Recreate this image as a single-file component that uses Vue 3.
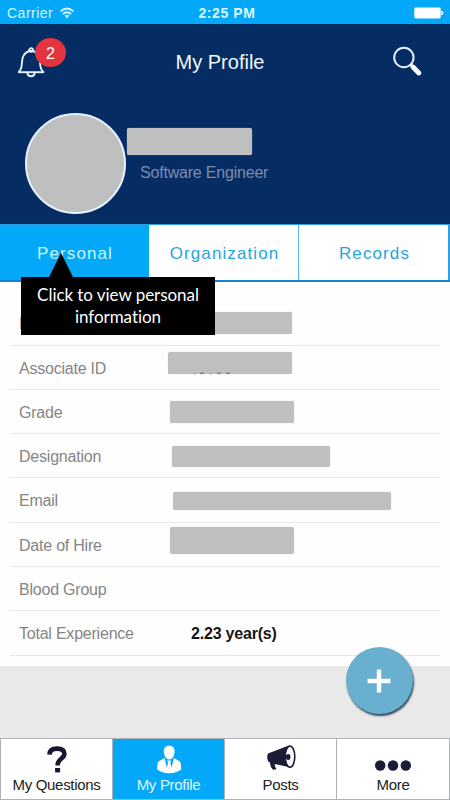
<template>
  <div class="screen">
    <div class="status-bar">
      <div class="carrier">
        <span class="carrier-name">Carrier</span>
        <svg class="wifi" viewBox="0 0 16 12" width="16" height="12">
          <path d="M1.5 4.4 Q8 -1.3 14.5 4.4 M3.8 7 Q8 3.4 12.2 7" fill="none" stroke="#d9f6ff" stroke-width="1.9" />
          <path d="M5.5 8.6 Q8 6.8 10.5 8.6 L8 11.4 Z" fill="#d9f6ff" />
        </svg>
      </div>
      <span class="time">2:25 PM</span>
      <svg class="battery" viewBox="0 0 30 12" width="30" height="12">
        <rect x="0.3" y="0.5" width="26.4" height="11" rx="1.4" fill="#fff" />
        <path d="M27.4 3.6 Q29.4 4.2 29.4 6 Q29.4 7.8 27.4 8.4 Z" fill="#fff" />
      </svg>
    </div>

    <header class="header">
      <div class="title-bar">
        <div class="bell">
          <svg viewBox="0 0 30 32" width="30" height="32">
            <g fill="none" stroke="#eaf2ff" stroke-width="1.9">
              <path d="M2 25.2 H28.2" />
              <path d="M2.6 24.8 Q5.7 23 5.9 16 C6 9 8 5.6 13.2 4 H17 C22 5.6 24 9 24.1 16 Q24.3 23 27.4 24.8" />
              <circle cx="15.1" cy="2.9" r="1.8" />
              <path d="M11.3 25.5 Q11.8 29.2 15.1 29.2 Q18.3 29.2 18.8 25.5" />
            </g>
          </svg>
          <span class="badge">2</span>
        </div>
        <h1 class="title">My Profile</h1>
        <svg class="search" viewBox="0 0 30 30" width="30" height="30">
          <circle cx="11.9" cy="11.5" r="9.7" fill="none" stroke="#e8f0fc" stroke-width="2" />
          <path d="M18.2 18 L21 20.8" stroke="#fff" stroke-width="2.6" />
          <path d="M21 21 L26.8 27" stroke="#fff" stroke-width="4.8" stroke-linecap="round" />
        </svg>
      </div>
      <div class="user">
        <div class="avatar"></div>
        <div class="user-info">
          <div class="masked user-name"></div>
          <div class="user-role">Software Engineer</div>
        </div>
      </div>
    </header>

    <nav class="tabs">
      <button
        v-for="tab in tabs"
        :key="tab"
        class="tab"
        :class="{ active: tab === activeTab }"
        @click="activeTab = tab"
      >
        {{ tab }}
      </button>
      <div class="tooltip">Click to view personal<br />information</div>
    </nav>

    <main class="details">
      <div v-for="row in rows" :key="row.label" class="row">
        <span class="label">{{ row.label }}</span>
        <strong v-if="row.value" class="value">{{ row.value }}</strong>
        <div v-else-if="row.mask" class="masked" :style="maskStyle(row.mask)">
          <svg v-if="row.label === 'Associate ID'" class="residue" viewBox="0 0 42 3" width="42" height="3">
            <path d="M3 1 v1 M8 .8 q2 1.8 4 0 M19 1 v1 M25 .8 q2 1.8 4 0 M34 .8 q2 1.8 4 0" />
          </svg>
        </div>
      </div>
    </main>

    <div class="spacer">
      <button class="fab" aria-label="Add">
        <svg viewBox="0 0 24 24" width="24" height="24">
          <path d="M12 .6 V23.4 M.6 12 H23.4" stroke="#fff" stroke-width="4.4" />
        </svg>
      </button>
    </div>

    <footer class="bottom-nav">
      <div class="nav-item">
        <svg viewBox="0 0 36 30" width="36" height="30">
          <path d="M10.4 9.6 C10.6 5 13.4 3.6 18 3.6 C23 3.6 25.4 5.8 25.4 8.8 C25.4 14 18.6 13.2 18.6 20.4" fill="none" stroke="#17182e" stroke-width="4.6" />
          <rect x="16.1" y="23" width="5" height="4.4" fill="#17182e" />
        </svg>
        <span>My Questions</span>
      </div>
      <div class="nav-item active">
        <svg viewBox="0 0 36 30" width="36" height="30">
          <path d="M18.2 .8 C22.1 .8 23.8 3.3 23.6 6.8 C23.4 10.4 21.6 14.4 18.2 14.4 C14.8 14.4 13 10.4 12.8 6.8 C12.6 3.3 14.3 .8 18.2 .8 Z" fill="#fff" />
          <path d="M13.6 13 L7.8 16.2 Q6.2 17.2 6.2 24.6 Q11 28.2 18.2 28.2 Q25.5 28.2 30.2 24.6 Q30.2 17.2 28.6 16.2 L22.8 13 L20.6 22.8 L19.3 17.6 L20.2 15.6 H16.2 L17.1 17.6 L15.8 22.8 Z" fill="#fff" />
        </svg>
        <span>My Profile</span>
      </div>
      <div class="nav-item">
        <svg viewBox="0 0 36 30" width="36" height="30">
          <path d="M5 8.6 L25.8 .4 L28 22.6 L11.8 19 Q11.4 21.4 13.6 24.2 L10 24.8 Q6.8 21.5 7 17.6 L5.2 16.4 Q3.3 12 5 8.6 Z" fill="#1b1c36" />
          <ellipse cx="27" cy="11.6" rx="4.8" ry="10.6" fill="#fff" stroke="#1b1c36" stroke-width="1.6" />
          <ellipse cx="25.2" cy="12" rx="2.3" ry="3" fill="#1b1c36" />
        </svg>
        <span>Posts</span>
      </div>
      <div class="nav-item">
        <svg viewBox="0 0 36 30" width="36" height="30">
          <g fill="#1b1c36">
            <circle cx="5.2" cy="20.5" r="5.2" />
            <circle cx="18" cy="20.5" r="5.2" />
            <circle cx="30.8" cy="20.5" r="5.2" />
          </g>
        </svg>
        <span>More</span>
      </div>
    </footer>
  </div>
</template>

<script setup>
import { ref } from 'vue'

const tabs = ['Personal', 'Organization', 'Records']
const activeTab = ref('Personal')

// mask: size of the hidden value and its offset inside the row
const rows = [
  { label: 'Name', mask: { left: 0, top: 10.5, width: 124, height: 22 } },
  { label: 'Associate ID', mask: { left: 0, top: 6, width: 124, height: 22 } },
  { label: 'Grade', mask: { left: 2, top: 11.5, width: 124, height: 22 } },
  { label: 'Designation', mask: { left: 4, top: 11.5, width: 158, height: 21 } },
  { label: 'Email', mask: { left: 5, top: 13.5, width: 218, height: 18 } },
  { label: 'Date of Hire', mask: { left: 2, top: 4, width: 124, height: 27 } },
  { label: 'Blood Group' },
  { label: 'Total Experience', value: '2.23 year(s)' }
]

const maskStyle = (mask) => ({
  marginLeft: mask.left + 'px',
  marginTop: mask.top + 'px',
  width: mask.width + 'px',
  height: mask.height + 'px'
})
</script>

<style>
body {
  margin: 0;
  background: #e9e9e9;
}
</style>

<style scoped>
.screen {
  display: flex;
  flex-direction: column;
  width: 450px;
  height: 800px;
  overflow: hidden;
  background: #e9e9e9;
  font-family: 'Liberation Sans', Arial, sans-serif;
}

.screen * {
  box-sizing: border-box;
}

button {
  padding: 0;
  border: 0;
  font-family: inherit;
}

.status-bar {
  display: grid;
  grid-template-columns: 1fr auto 1fr;
  align-items: center;
  height: 24px;
  padding: 1px 6px 0 7px;
  background: #03a9f8;
  color: #d9f6ff;
  font-size: 14px;
}

.carrier {
  display: flex;
  align-items: center;
  gap: 6px;
}

.carrier-name {
  letter-spacing: 0.5px;
}

.time {
  padding-left: 3px;
  font-weight: bold;
  letter-spacing: 0.6px;
}

.battery {
  justify-self: end;
}

.header {
  height: 200px;
  background: #052d64;
}

.title-bar {
  display: grid;
  grid-template-columns: 1fr auto 1fr;
  height: 89px;
  padding: 0 28px 0 16px;
}

.bell {
  position: relative;
  padding-top: 23px;
}

.badge {
  position: absolute;
  top: 14px;
  left: 19px;
  width: 31px;
  height: 29px;
  border-radius: 50%;
  background: #e3353f;
  color: #fff;
  font-size: 16px;
  line-height: 31px;
  text-align: center;
}

.title {
  margin: 26px 0 0;
  padding-left: 2px;
  color: #f1f6ff;
  font-size: 20px;
  font-weight: normal;
  line-height: 24px;
}

.search {
  margin-top: 22px;
  justify-self: end;
}

.user {
  display: flex;
  padding-left: 25px;
}

.avatar {
  width: 101px;
  height: 101px;
  border: 2px solid #e8f1ff;
  border-radius: 50%;
  background: #bfbfbf;
}

.user-info {
  padding: 15px 0 0 1px;
}

.masked {
  border-radius: 2px;
  background: #bfbfbf;
  box-shadow: 0 0 1px #bfbfbf;
}

.user-name {
  width: 125px;
  height: 27px;
}

.user-role {
  margin: 8px 0 0 13px;
  color: #7b8cae;
  font-size: 16px;
  line-height: 20px;
  letter-spacing: -0.2px;
}

.tabs {
  position: relative;
  display: grid;
  grid-template-columns: 149px 150px 151px;
  height: 58px;
  border-top: 1px solid #2ba2e8;
  border-bottom: 2px solid #1482cc;
  background: #fff;
}

.tab {
  border-right: 1px solid #55bbed;
  background: #fff;
  color: #27a4da;
  font-size: 17px;
  line-height: 20px;
  letter-spacing: 1.1px;
  padding: 3px 0 0 2px;
}

.tab:nth-child(3) {
  border-right: 2px solid #2ba2e8;
}

.tab.active {
  border-right-color: #03a9f8;
  background: #03a9f8;
  color: #c8f4ff;
}

.tooltip {
  position: absolute;
  top: 52px;
  left: 21px;
  z-index: 2;
  width: 194px;
  height: 58px;
  padding-top: 7px;
  background: #000;
  color: #fff;
  font-family: Lato, sans-serif;
  font-size: 17px;
  line-height: 22px;
  letter-spacing: -0.05px;
  text-align: center;
}

.tooltip::before {
  content: '';
  position: absolute;
  top: -24px;
  left: 28px;
  border: 12.5px solid transparent;
  border-top: 0;
  border-bottom: 24px solid #000;
}

.details {
  height: 384px;
  padding: 19.3px 10px 0;
  background: #fefefe;
}

.row {
  display: grid;
  grid-template-columns: 149px 1fr;
  align-items: start;
  height: 44.3px;
  padding-left: 9px;
  border-bottom: 1px solid #e9e9e9;
}

.label {
  padding-top: 13px;
  color: #858585;
  font-size: 16px;
  line-height: 20px;
  letter-spacing: -0.22px;
}

.value {
  padding: 13px 0 0 23px;
  color: #161616;
  font-size: 16px;
  line-height: 20px;
  letter-spacing: -0.2px;
}

.residue {
  display: block;
  margin: 20px 0 0 24px;
  fill: none;
  stroke: #666;
  stroke-width: 1;
}

.spacer {
  position: relative;
  flex: 1;
}

.fab {
  position: absolute;
  top: -19px;
  left: 346px;
  display: flex;
  align-items: center;
  justify-content: center;
  width: 67px;
  height: 67px;
  padding-right: 2px;
  border-radius: 50%;
  background: #69afd0;
  box-shadow: 1px 2px 2px #34495a;
}

.bottom-nav {
  display: grid;
  grid-template-columns: repeat(4, 112px);
  height: 62px;
  border: 1px solid #aeb2b6;
  background: #fff;
}

.nav-item {
  display: flex;
  flex-direction: column;
  align-items: center;
  padding-top: 6px;
  border-right: 1px solid #aeb2b6;
  color: #222;
  font-size: 15px;
  line-height: 20px;
  letter-spacing: -0.3px;
}

.nav-item:last-child {
  border-right: 0;
}

.nav-item.active {
  background: #03a9f8;
  color: #def8ff;
}
</style>
